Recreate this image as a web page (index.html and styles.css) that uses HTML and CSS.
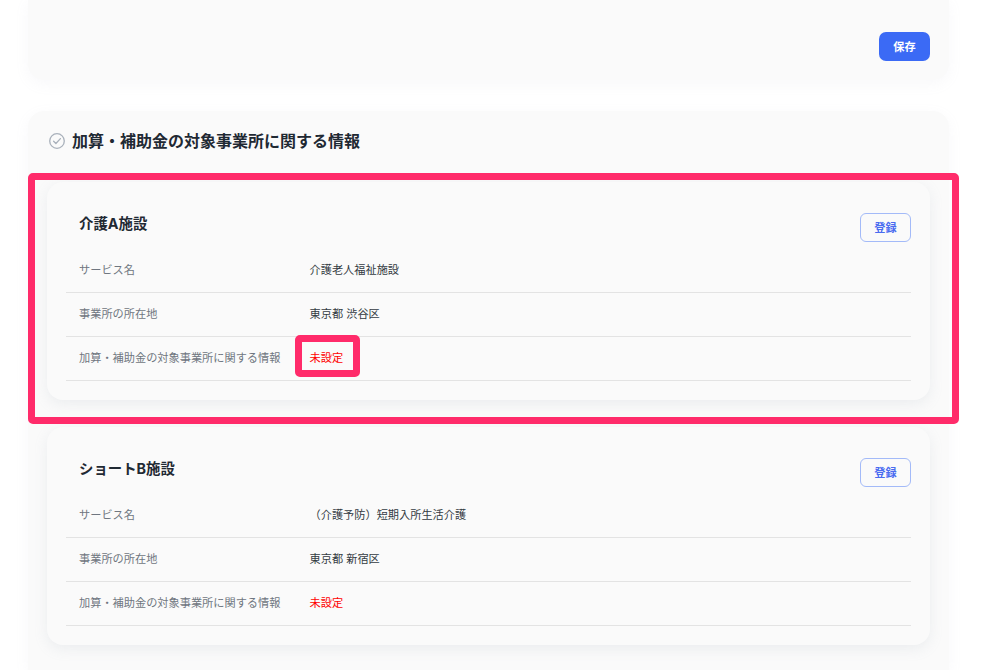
FILE: index.html
```html
<!DOCTYPE html>
<html lang="ja">
<head>
<meta charset="utf-8">
<title>加算・補助金の対象事業所に関する情報</title>
<link rel="stylesheet" href="styles.css">
</head>
<body>
<main class="page">
  <section class="panel panel-top">
    <button class="btn btn-primary">保存</button>
  </section>
  <section class="panel panel-main">
    <h2 class="panel-title">
      <svg class="check" viewBox="0 0 16 16" width="16" height="16" fill="none" aria-hidden="true">
        <circle cx="8" cy="8" r="7.3" stroke="#a9b1bb" stroke-width="1.3"/>
        <path d="M4.6 8.2l2.3 2.3 4.5-4.9" stroke="#a9b1bb" stroke-width="1.3" stroke-linecap="round" stroke-linejoin="round"/>
      </svg>
      加算・補助金の対象事業所に関する情報
    </h2>
    <div class="facility">
      <div class="facility-head">
        <h3 class="facility-name">介護A施設</h3>
        <button class="btn btn-outline">登録</button>
      </div>
      <dl class="rows">
        <div class="row"><dt>サービス名</dt><dd>介護老人福祉施設</dd></div>
        <div class="row"><dt>事業所の所在地</dt><dd>東京都 渋谷区</dd></div>
        <div class="row"><dt>加算・補助金の対象事業所に関する情報</dt><dd class="unset">未設定</dd></div>
      </dl>
    </div>
    <div class="facility">
      <div class="facility-head">
        <h3 class="facility-name">ショートB施設</h3>
        <button class="btn btn-outline">登録</button>
      </div>
      <dl class="rows">
        <div class="row"><dt>サービス名</dt><dd>（介護予防）短期入所生活介護</dd></div>
        <div class="row"><dt>事業所の所在地</dt><dd>東京都 新宿区</dd></div>
        <div class="row"><dt>加算・補助金の対象事業所に関する情報</dt><dd class="unset">未設定</dd></div>
      </dl>
    </div>
  </section>
</main>
<div class="mark mark-card"></div>
<div class="mark mark-value"></div>
</body>
</html>
```

FILE: styles.css
```css
* { box-sizing: border-box; }
html, body { margin: 0; height: 670px; overflow: hidden; background: #fff; }
body {
  position: relative;
  font-family: Inter, "Noto Sans CJK JP", sans-serif;
  color: #1f2933;
  font-size: 11.2px;
  text-spacing-trim: space-all;
}
.page { padding: 0 34px 0 28px; display: flex; flex-direction: column; gap: 31px; }
.panel {
  background: #fafafa;
  border-radius: 16px;
  box-shadow: 0 4px 14px rgba(160, 170, 190, 0.08);
}
.panel-top {
  height: 80px;
  border-radius: 0 0 16px 16px;
  display: flex;
  justify-content: flex-end;
  align-items: flex-end;
  padding: 0 19px 19px;
}
.panel-main { padding: 16px 19px 0; height: 559px; border-radius: 16px 16px 0 0; }
.panel-title {
  margin: 0 0 27px;
  height: 28px;
  display: flex;
  align-items: center;
  gap: 7px;
  padding-left: 2px;
  font-size: 16px;
  line-height: 28px;
  font-weight: 700;
}
.check { flex: none; }
.btn {
  font: inherit;
  font-weight: 700;
  height: 29px;
  width: 51px;
  border-radius: 6px;
  padding: 0 0 2px;
}
.btn-primary { background: #3b6af5; border: 0; color: #fff; border-radius: 7px; }
.btn-outline { background: #fff0; border: 1px solid #a3baf8; color: #4a6cf0; }
.facility {
  background: #fafafa;
  border-radius: 16px;
  padding: 31px 19px 19px;
  box-shadow: 0 4px 14px rgba(150, 160, 180, 0.14);
  margin-bottom: 27px;
}
.facility-head {
  display: flex;
  justify-content: space-between;
  align-items: flex-start;
  height: 36px;
}
.facility-name {
  margin: 0;
  padding-left: 13px;
  font-size: 14.4px;
  line-height: 22px;
  font-weight: 700;
}
.rows { margin: 0; }
.row {
  display: flex;
  align-items: center;
  height: 44px;
  padding-bottom: 4px;
  border-bottom: 1px solid #e3e3e3;
  padding-left: 13px;
}
.row dt { width: 230.5px; color: #6f7680; }
.row dd { margin: 0; color: #333a42; }
.row dd.unset { color: #ff0000; }
.mark {
  position: absolute;
  border: 7px solid #ff2b6a;
  border-radius: 5px;
  pointer-events: none;
}
.mark-card { left: 28px; top: 173px; width: 931px; height: 251px; }
.mark-value { left: 295px; top: 335px; width: 65px; height: 42px; }
```
